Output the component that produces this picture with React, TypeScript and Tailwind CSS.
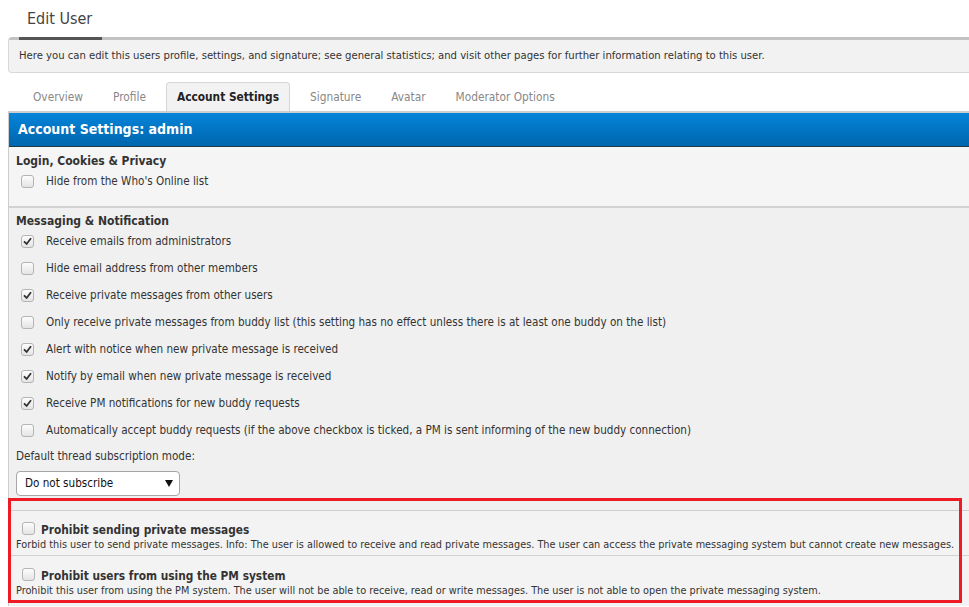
import React from "react"

const font = { fontFamily: '"DejaVu Sans Condensed", "DejaVu Sans", Verdana, sans-serif', fontStretch: "condensed" as const }

function Checkbox({ checked }: { checked?: boolean }) {
  return (
    <span className="flex h-[13px] w-[13px] shrink-0 items-center justify-center rounded-[3px] border border-[#b4b4b4] bg-gradient-to-b from-[#fdfdfd] to-[#e4e4e4]">
      {checked && (
        <svg width="9" height="9" viewBox="0 0 9 9">
          <path d="M1.5 4.8 L3.6 7 L7.6 1.8" fill="none" stroke="#333" strokeWidth="1.8" strokeLinecap="round" strokeLinejoin="round" />
        </svg>
      )}
    </span>
  )
}

function Row({ checked, label }: { checked?: boolean; label: string }) {
  return (
    <div className="flex h-[27px] items-center pl-[12px]">
      <Checkbox checked={checked} />
      <span className="ml-[12px] text-[11.6px] text-[#333]">{label}</span>
    </div>
  )
}

const tabs = ["Overview", "Profile", "Account Settings", "Signature", "Avatar", "Moderator Options"]

const messaging: [boolean, string][] = [
  [true, "Receive emails from administrators"],
  [false, "Hide email address from other members"],
  [true, "Receive private messages from other users"],
  [false, "Only receive private messages from buddy list (this setting has no effect unless there is at least one buddy on the list)"],
  [true, "Alert with notice when new private message is received"],
  [true, "Notify by email when new private message is received"],
  [true, "Receive PM notifications for new buddy requests"],
  [false, "Automatically accept buddy requests (if the above checkbox is ticked, a PM is sent informing of the new buddy connection)"],
]

export default function App() {
  return (
    <div className="relative h-[607px] w-[969px] overflow-hidden bg-white" style={font}>
      <div className="w-[1000px] pl-[8px]">
        <h2 className="h-[37px] pl-[19px] pt-[8px] text-[16px] leading-[22px] text-[#444]">Edit User</h2>

        <div className="overflow-hidden rounded-[4px] border border-t-0 border-[#d8d8d8] bg-[#f2f2f2]">
          <div className="flex h-[3px]">
            <div className="w-[10px] bg-[#c2c2c2]" />
            <div className="w-[83px] bg-[#555]" />
            <div className="flex-1 bg-[#c2c2c2]" />
          </div>
          <p className="h-[32px] pl-[10px] pt-[9px] text-[11.2px] leading-[14px] text-[#333]">
            Here you can edit this users profile, settings, and signature; see general statistics; and visit other pages for further information relating to this user.
          </p>
        </div>

        <div className="mt-[9px] flex h-[29px] items-end gap-[10px] pl-[15px]">
          {tabs.map((t) =>
            t === "Account Settings" ? (
              <div key={t} className="flex h-[29px] items-center rounded-t-[4px] border border-b-0 border-[#d6d6d6] bg-[#f2f2f2] px-[10px] pt-[2px] text-[11.8px] font-bold text-[#222]">
                {t}
              </div>
            ) : (
              <div key={t} className="flex h-[29px] items-center px-[10px] pt-[2px] text-[11.8px] text-[#888]">
                {t}
              </div>
            )
          )}
        </div>

        <div className="border-l border-t-2 border-[#cdcdcd]">
          <div className="flex h-[34px] items-center border-b border-[#1c3a47] bg-gradient-to-b from-[#0585da] to-[#0065ae] pl-[9px] text-[14px] font-bold text-white">
            Account Settings: admin
          </div>

          <div className="h-[59px] bg-[#f5f5f5] pt-[7px]">
            <div className="pl-[7px] text-[12px] font-bold leading-[14px] text-[#333]">Login, Cookies &amp; Privacy</div>
            <Row label="Hide from the Who's Online list" />
          </div>

          <div className="border-t-2 border-[#d2d2d2] bg-[#f0f0f0] pb-[14px] pt-[6px]">
            <div className="pl-[7px] text-[12px] font-bold leading-[14px] text-[#333]">Messaging &amp; Notification</div>
            {messaging.map(([c, l]) => (
              <Row key={l} checked={c} label={l} />
            ))}
            <div className="mt-[5px] pl-[7px] text-[11.6px] leading-[15px] text-[#333]">Default thread subscription mode:</div>
            <div className="ml-[7px] mt-[7px] flex h-[25px] w-[164px] items-center justify-between rounded-[4px] border border-[#a6a6a6] bg-white pl-[8px] pr-[6px] text-[11.6px] text-[#111]">
              <span>Do not subscribe</span>
              <svg width="8" height="7" viewBox="0 0 8 7">
                <path d="M0 0 H8 L4 7 Z" fill="#111" />
              </svg>
            </div>
          </div>

          <div className="border-t border-[#cfcfcf] bg-[#f3f3f3]">
            <div className="border-b border-[#d2d2d2] pb-[3px] pl-[7px] pt-[11px]">
              <div className="flex items-center">
                <span className="-mt-[4px] ml-[6px]"><Checkbox /></span>
                <span className="ml-[6px] text-[11.8px] font-bold leading-[16px] text-[#333]">Prohibit sending private messages</span>
              </div>
              <div className="text-[10.8px] leading-[14px] text-[#333]">
                Forbid this user to send private messages. Info: The user is allowed to receive and read private messages. The user can access the private messaging system but cannot create new messages.
              </div>
            </div>
            <div className="pb-[8px] pl-[7px] pt-[12px]">
              <div className="flex items-center">
                <span className="-mt-[4px] ml-[6px]"><Checkbox /></span>
                <span className="ml-[6px] text-[11.8px] font-bold leading-[16px] text-[#333]">Prohibit users from using the PM system</span>
              </div>
              <div className="text-[10.8px] leading-[14px] text-[#333]">
                Prohibit this user from using the PM system. The user will not be able to receive, read or write messages. The user is not able to open the private messaging system.
              </div>
            </div>
          </div>
        </div>
      </div>

      <div className="pointer-events-none absolute left-[8px] top-[498px] h-[105px] w-[954px] border-[3px] border-[#ed1c24]" />
    </div>
  )
}
